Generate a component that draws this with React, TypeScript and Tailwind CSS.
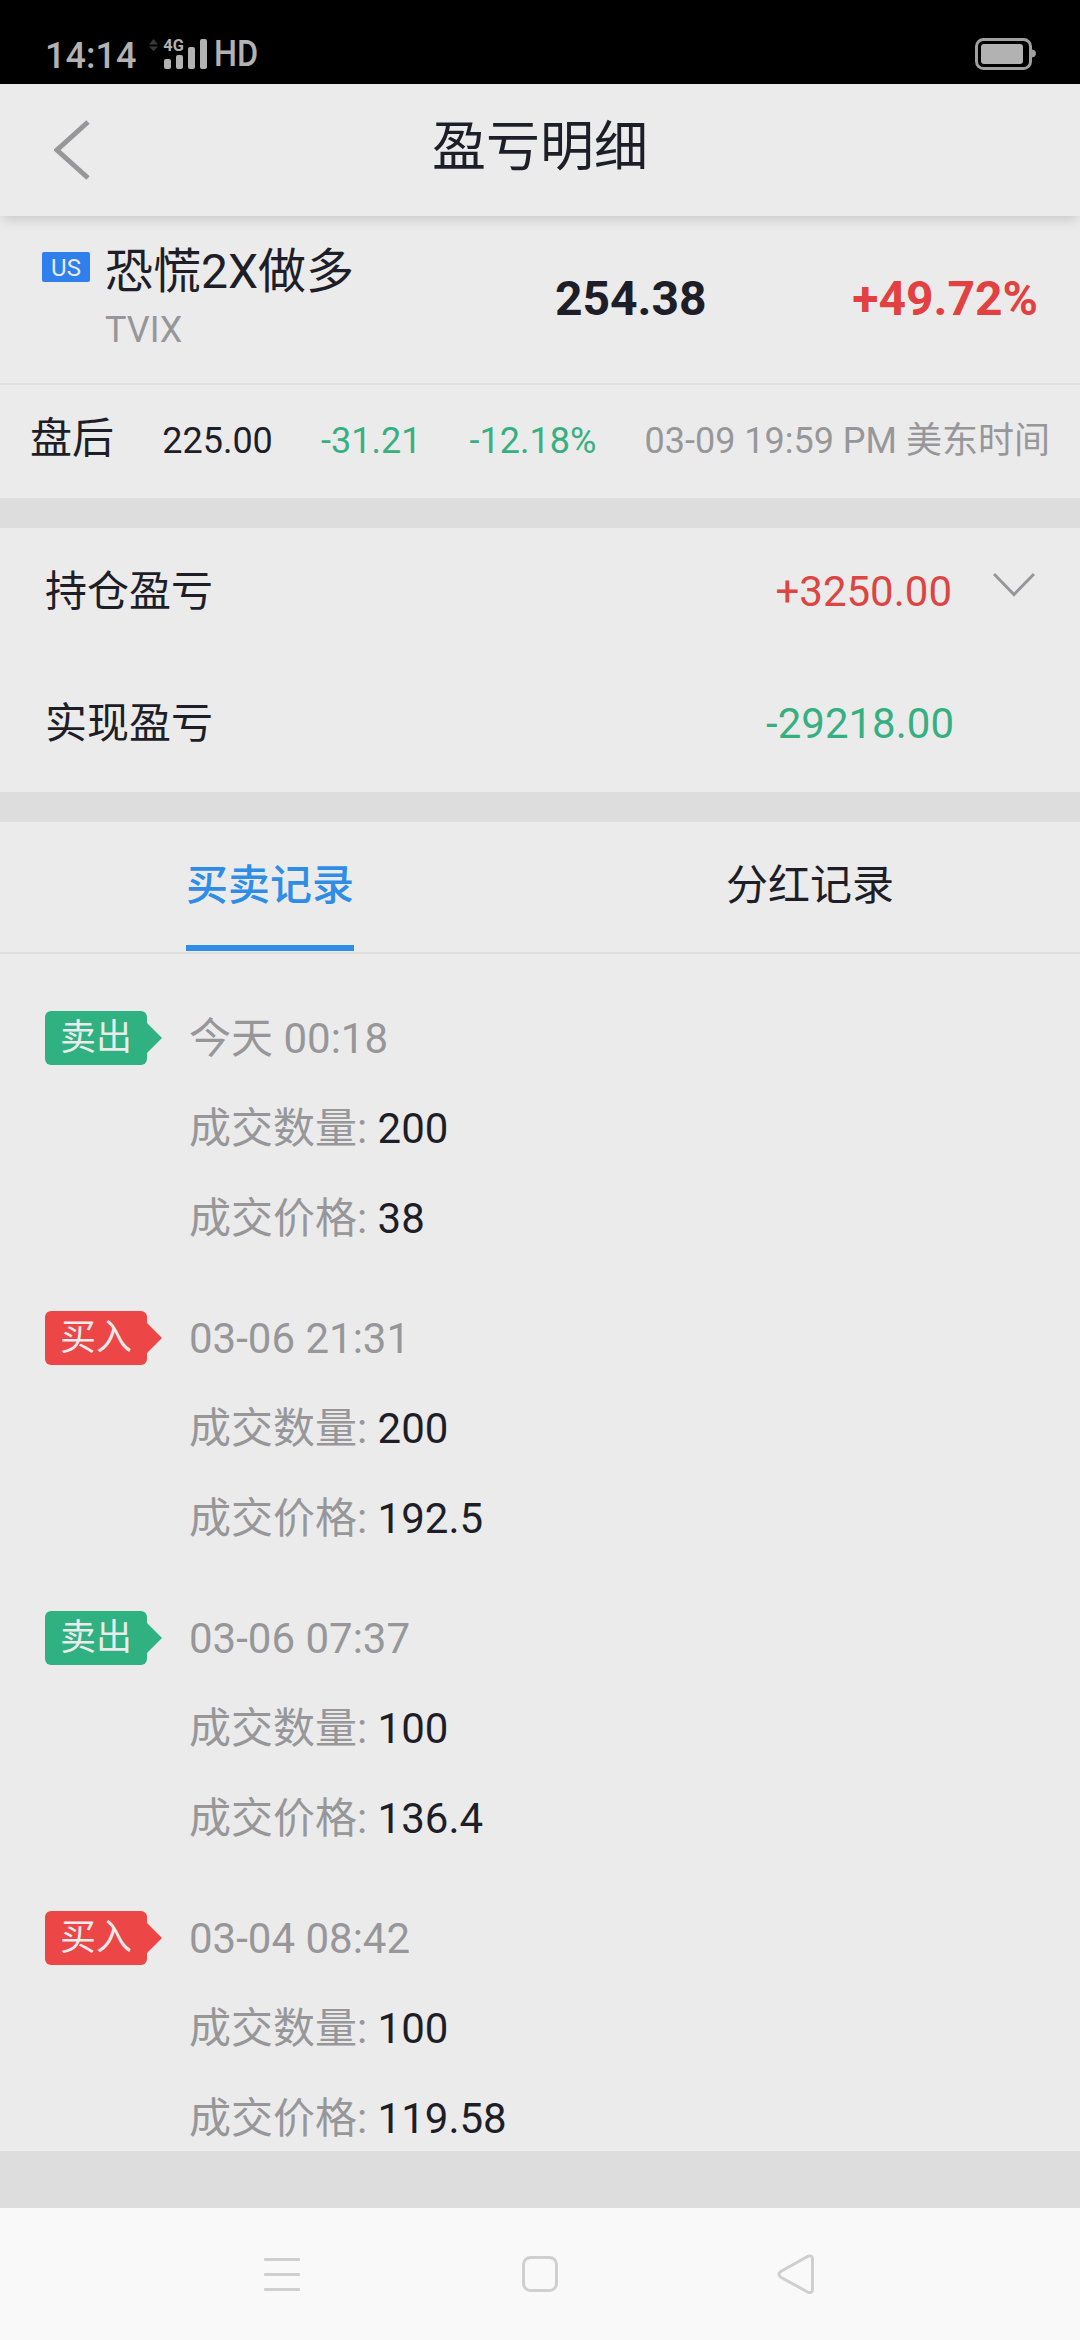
import { useState } from "react";

type Side = "buy" | "sell";

interface TradeRecord {
  id: number;
  side: Side;
  time: string;
  quantity: string;
  price: string;
}

const records: TradeRecord[] = [
  { id: 1, side: "sell", time: "今天 00:18", quantity: "200", price: "38" },
  { id: 2, side: "buy", time: "03-06 21:31", quantity: "200", price: "192.5" },
  { id: 3, side: "sell", time: "03-06 07:37", quantity: "100", price: "136.4" },
  { id: 4, side: "buy", time: "03-04 08:42", quantity: "100", price: "119.58" },
];

const tabs = [
  { key: "trades", label: "买卖记录" },
  { key: "dividends", label: "分红记录" },
];

function StatusBar() {
  return (
    <div className="flex h-[84px] shrink-0 items-start justify-between bg-black pl-[45px] pr-[44px] text-[#b2b2b2]">
      <div className="flex items-start">
        <span className="mt-[35px] w-[102px] text-[36px] font-medium leading-[42px]">14:14</span>
        <svg className="mt-[36px] h-[36px] w-[62px]" viewBox="0 0 62 36">
          <path d="M2 8.5 6.5 3l4.5 5.5zM2 10.5h9L6.5 15z" fill="#3a3a3a" />
          <text
            x="16.3"
            y="15.2"
            fontSize="17"
            fontWeight="700"
            textLength="20.5"
            lengthAdjust="spacingAndGlyphs"
            fill="currentColor"
          >
            4G
          </text>
          <g fill="currentColor">
            <rect x="17" y="23" width="7" height="10" rx="2" />
            <rect x="29" y="19" width="7" height="14" rx="2" />
            <rect x="41" y="11" width="7" height="22" rx="2" />
            <rect x="53" y="3" width="7" height="30" rx="2" />
          </g>
        </svg>
        <span className="ml-[5px] mt-[33px] origin-left scale-x-[0.9] text-[36px] font-medium leading-[42px]">HD</span>
      </div>
      <svg className="mt-[38px] h-[32px] w-[61px]" viewBox="0 0 61 32">
        <rect x="1.5" y="1.5" width="54" height="29" rx="7" fill="none" stroke="#a0a0a0" strokeWidth="3" />
        <rect x="6" y="6" width="42" height="20" rx="3" fill="#b2b2b2" />
        <path d="M57 12a3.5 3.5 0 0 1 0 7z" fill="#a0a0a0" stroke="#a0a0a0" />
      </svg>
    </div>
  );
}

function SideTag({ side }: { side: Side }) {
  const color = side === "sell" ? "bg-[#30b181] text-[#30b181]" : "bg-[#ed4646] text-[#ed4646]";

  return (
    <div className={`relative flex h-[54px] w-[102px] items-center justify-center rounded-[6px] ${color}`}>
      <span className="text-[36px] leading-[54px] text-[#ebebeb]">{side === "sell" ? "卖出" : "买入"}</span>
      <svg className="absolute left-full top-[12px] h-[30px] w-[15px]" viewBox="0 0 15 30">
        <path d="M0 0 15 15 0 30z" fill="currentColor" />
      </svg>
    </div>
  );
}

function RecordItem({ record }: { record: TradeRecord }) {
  return (
    <li className="flex items-start text-[42px] leading-[90px] text-[#97979a]">
      <div className="mt-[17px] w-[144px]">
        <SideTag side={record.side} />
      </div>
      <div>
        <p>{record.time}</p>
        <p>
          成交数量: <span className="text-[#1e1e28]">{record.quantity}</span>
        </p>
        <p>
          成交价格: <span className="text-[#1e1e28]">{record.price}</span>
        </p>
      </div>
    </li>
  );
}

export default function App() {
  const [activeTab, setActiveTab] = useState("trades");

  return (
    <div className="flex h-[2340px] w-[1080px] flex-col overflow-hidden bg-[#dddddd] font-['Roboto','Noto_Sans_CJK_SC',sans-serif] text-[#1e1e28]">
      <StatusBar />

      {/* Header */}
      <header className="relative z-10 flex h-[132px] shrink-0 items-center bg-[#ebebeb] px-[54px] shadow-[0_5px_12px_-2px_rgba(0,0,0,0.16)]">
        <button className="w-[60px] cursor-pointer">
          <svg className="h-[60px] w-[36px]" viewBox="0 0 36 60" fill="none">
            <path d="M34 2 3 30l31 28" stroke="#97979a" strokeWidth="5" />
          </svg>
        </button>
        <h1 className="mb-[4px] flex-1 pr-[60px] text-center text-[54px] leading-[80px]">盈亏明细</h1>
      </header>

      {/* Quote */}
      <section className="shrink-0 bg-[#ebebeb]">
        <div className="flex h-[169px] border-b-2 border-[#dedede] pl-[42px] pr-[42px]">
          <span className="mt-[36px] h-[30px] w-[48px] rounded-[2px] bg-[#2f80ed] text-center text-[24px] leading-[32px] text-[#ebebeb]">
            US
          </span>
          <div className="ml-[15px] w-[450px]">
            <p className="mt-[21px] text-[48px] leading-[70px]">恐慌2X做多</p>
            <p className="mt-[2px] text-[36px] leading-[42px] text-[#97979a]">TVIX</p>
          </div>
          <span className="text-[48px] font-bold leading-[165px]">254.38</span>
          <span className="ml-auto text-[48px] font-bold leading-[165px] text-[#e24141]">+49.72%</span>
        </div>
        <div className="flex h-[113px] items-start justify-between px-[30px] text-[36px] leading-[112px]">
          <span className="text-[42px] leading-[108px]">盘后</span>
          <span>225.00</span>
          <span className="text-[#37b081]">-31.21</span>
          <span className="text-[#37b081]">-12.18%</span>
          <span className="text-[#97979a]">03-09 19:59 PM 美东时间</span>
        </div>
      </section>

      {/* Profit and loss */}
      <section className="mt-[30px] shrink-0 bg-[#ebebeb] text-[42px] leading-[132px]">
        <div className="flex h-[132px] pl-[45px] pr-[45px]">
          <span className="-mt-[2px]">持仓盈亏</span>
          <span className="-mt-[2px] ml-auto text-[#dc4541]">+3250.00</span>
          <svg className="ml-[41px] mt-[44px] h-[26px] w-[42px]" viewBox="0 0 42 26" fill="none">
            <path d="m1 2 20 20.500L41 2" stroke="#97979a" strokeWidth="3" />
          </svg>
        </div>
        <div className="flex h-[132px] justify-between pl-[45px] pr-[126px]">
          <span className="-mt-[2px]">实现盈亏</span>
          <span className="-mt-[2px] text-[#37b081]">-29218.00</span>
        </div>
      </section>

      {/* Tabs */}
      <nav className="mt-[30px] flex h-[132px] shrink-0 border-b-2 border-[#dedede] bg-[#ebebeb]">
        {tabs.map((tab) => (
          <button
            key={tab.key}
            onClick={() => setActiveTab(tab.key)}
            className="flex flex-1 cursor-pointer justify-center text-[42px] leading-[128px]"
          >
            <span
              className={`h-[129px] border-b-[6px] ${
                activeTab === tab.key ? "border-[#2f8de6] font-medium text-[#2f8de6]" : "border-transparent"
              }`}
            >
              {tab.label}
            </span>
          </button>
        ))}
      </nav>

      {/* Records */}
      <ul className="flex h-[1197px] shrink-0 flex-col gap-[30px] overflow-hidden bg-[#ebebeb] px-[45px] pt-[40px]">
        {records.map((record) => (
          <RecordItem key={record.id} record={record} />
        ))}
      </ul>

      {/* System navigation */}
      <footer className="mt-auto flex h-[132px] shrink-0 items-center gap-[222px] bg-[#f9f9f9] pl-[264px] text-[#cfcfcf]">
        <svg className="h-[42px] w-[36px]" viewBox="0 0 36 42" fill="currentColor">
          <rect y="5" width="36" height="3" rx="1" />
          <rect y="20" width="36" height="3" rx="1" />
          <rect y="35" width="36" height="3" rx="1" />
        </svg>
        <svg className="h-[36px] w-[36px]" viewBox="0 0 36 36" fill="none">
          <rect x="1.5" y="1.5" width="33" height="33" rx="7" stroke="currentColor" strokeWidth="3" />
        </svg>
        <svg className="-ml-[3px] h-[42px] w-[38px]" viewBox="0 0 38 42" fill="none">
          <path
            d="M31 3.2 3.8 18.5Q0 21.3 3.8 24.2L31 39.2Q35.500 40.500 35.500 36.500V6Q35.500 2 31 3.2z"
            stroke="currentColor"
            strokeWidth="3"
          />
        </svg>
      </footer>
    </div>
  );
}
